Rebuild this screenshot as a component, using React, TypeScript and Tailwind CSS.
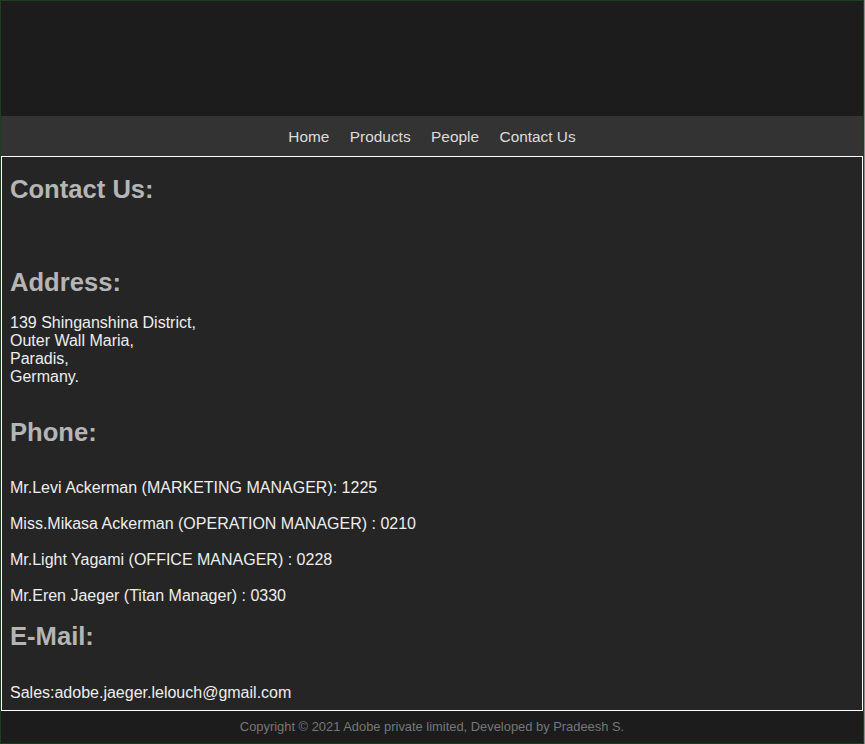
import React from 'react';

const phones = [
  'Mr.Levi Ackerman (MARKETING MANAGER): 1225',
  'Miss.Mikasa Ackerman (OPERATION MANAGER) : 0210',
  'Mr.Light Yagami (OFFICE MANAGER) : 0228',
  'Mr.Eren Jaeger (Titan Manager) : 0330',
];

const Heading = ({ children, className = '' }: { children: React.ReactNode; className?: string }) => (
  <h2 className={`text-[25.6px] leading-[29px] font-bold text-[#b5b5b5] ${className}`}>{children}</h2>
);

const App = () => {
  return (
    <div className="min-h-screen bg-[#8a8a8a] font-['Liberation_Sans',Arial,sans-serif]">
      <div className="w-[864px] h-[744px] border border-[#1f3d1f] bg-[#1c1c1c] flex flex-col">
        {/* Header */}
        <div className="h-[115px] bg-[#1c1c1c]" />

        {/* Nav */}
        <nav className="h-[40px] pt-[2px] bg-[#333333] flex items-center justify-center gap-[20.5px] text-[15.4px] text-[#dddddd]">
          <a href="#">Home</a>
          <a href="#">Products</a>
          <a href="#">People</a>
          <a href="#">Contact Us</a>
        </nav>

        {/* Content */}
        <main className="h-[555px] border border-white bg-[#252525] px-[8px] text-[16px] text-[#eeeeee]">
          <Heading className="mt-[18px]">Contact Us:</Heading>

          <Heading className="mt-[64px]">Address:</Heading>
          <p className="mt-[17px] leading-[18px]">
            139 Shinganshina District,
            <br />
            Outer Wall Maria,
            <br />
            Paradis,
            <br />
            Germany.
          </p>

          <Heading className="mt-[32px]">Phone:</Heading>
          <div className="mt-[32px] flex flex-col gap-[18px]">
            {phones.map((p) => (
              <p key={p} className="leading-[18px]">
                {p}
              </p>
            ))}
          </div>

          <Heading className="mt-[17px]">E-Mail:</Heading>
          <p className="mt-[33px] leading-[18px]">Sales:adobe.jaeger.lelouch@gmail.com</p>
        </main>

        {/* Footer */}
        <footer className="flex-1 pb-[1px] flex items-center justify-center text-[12.9px] text-[#777777]">
          Copyright © 2021 Adobe private limited, Developed by Pradeesh S.
        </footer>
      </div>
    </div>
  );
};

export default App;
